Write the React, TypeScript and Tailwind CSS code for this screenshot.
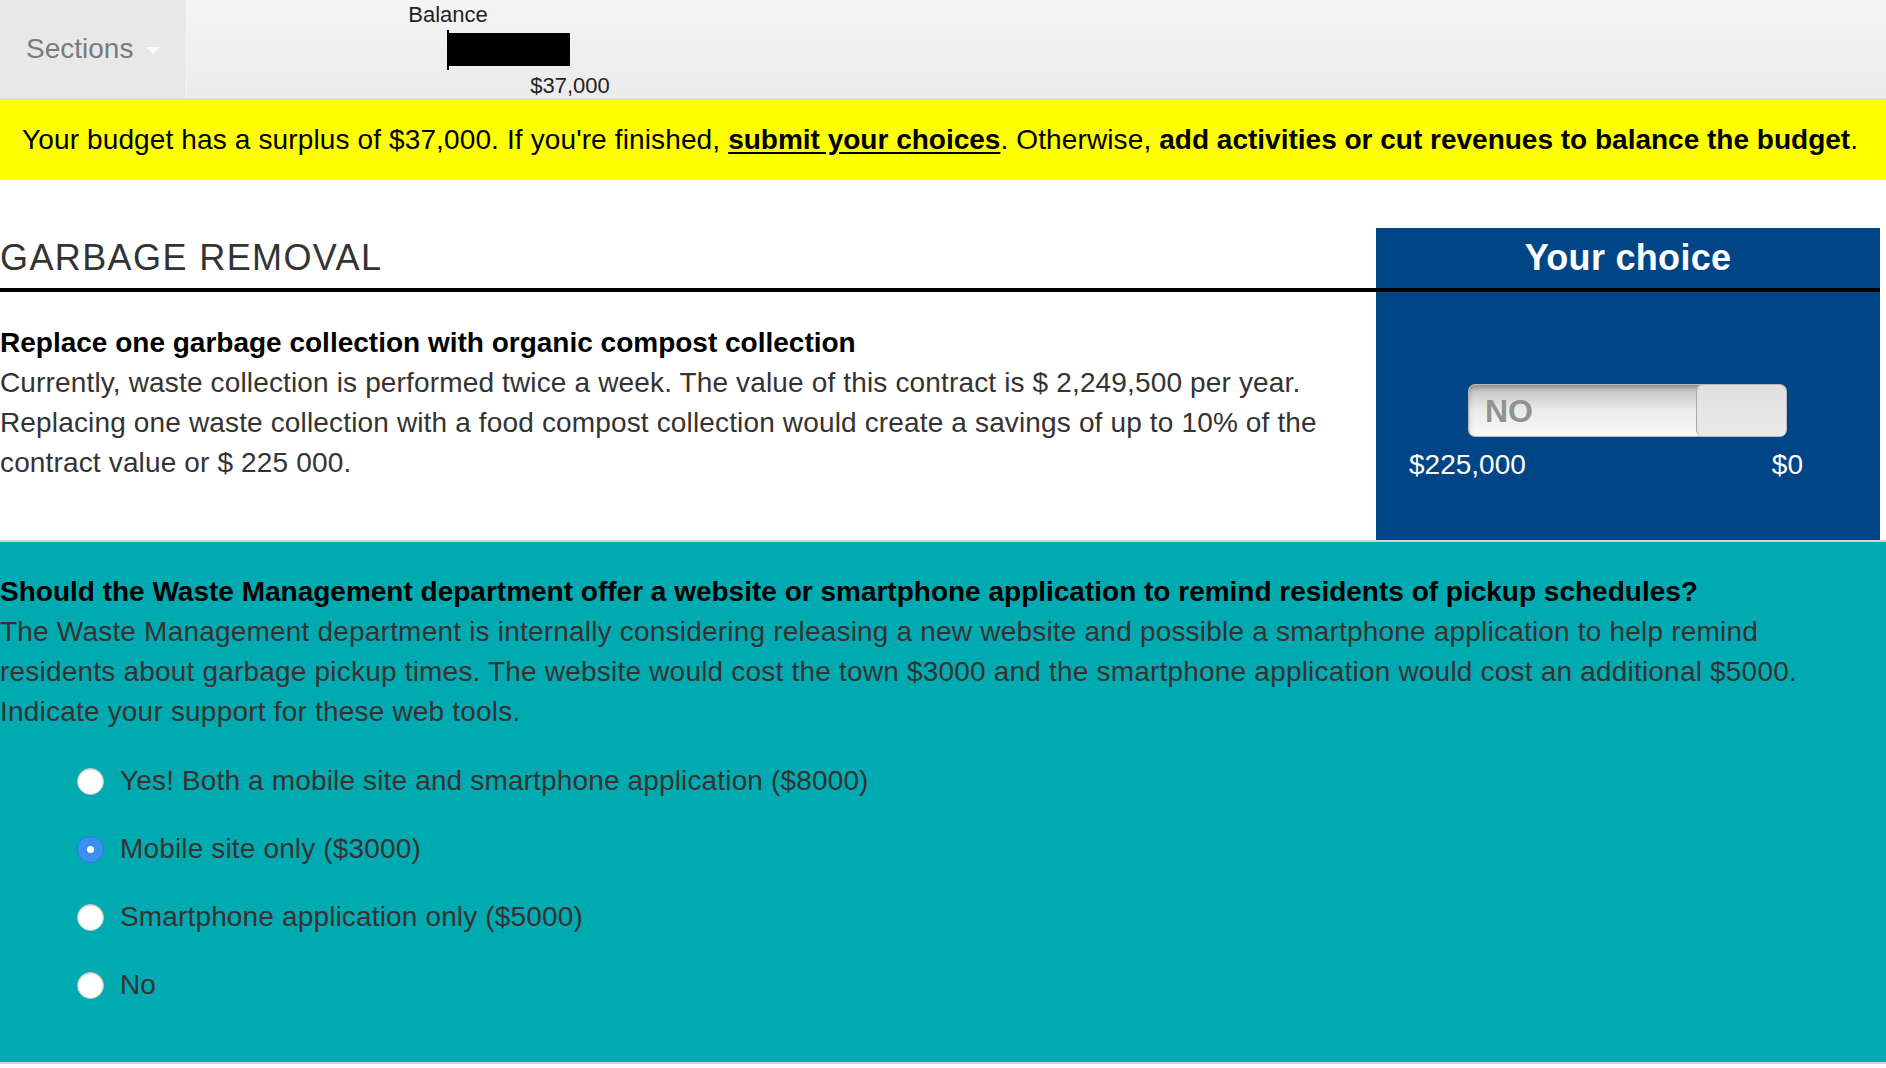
import { useState } from 'react'

const font = { fontFamily: '"Liberation Sans", Arial, Helvetica, sans-serif' }

const options = [
  'Yes! Both a mobile site and smartphone application ($8000)',
  'Mobile site only ($3000)',
  'Smartphone application only ($5000)',
  'No',
]

function TopBar() {
  return (
    <div className="flex h-[100px] border-b-2 border-[#dcdcdc] bg-linear-to-b from-[#f5f5f5] to-[#ebebeb]">
      {/* Sections */}
      <div className="flex w-[187px] items-center border-r border-[#f6f6f6] bg-[#e8e8e8] pl-[26px] text-[28px] text-[#7a7a7a]">
        Sections
        <svg width="14" height="8" viewBox="0 0 14 8" className="ml-[13px] mt-[3px]">
          <path d="M0 0 L14 0 L7 7 Z" fill="#fbfbfb" />
        </svg>
      </div>

      {/* Balance chart */}
      <div className="relative ml-[261px] h-full w-[300px]">
        <div className="absolute left-0 top-[1px] -translate-x-1/2 text-[22px] leading-[28px] text-[#222]">Balance</div>
        <div className="absolute left-[-1px] top-[30px] h-[40px] w-[2px] bg-black" />
        <div className="absolute left-0 top-[33px] h-[33px] w-[122px] bg-black" />
        <div className="absolute left-[122px] top-[72px] -translate-x-1/2 text-[22px] leading-[28px] text-[#222]">$37,000</div>
      </div>
    </div>
  )
}

function Notice() {
  return (
    <div className="flex h-[80px] items-center bg-[#ffff00] pl-[22px] text-[28px] tracking-[0.13px] text-black">
      <p>
        Your budget has a surplus of $37,000. If you're finished,{' '}
        <a className="font-bold tracking-normal underline underline-offset-[3px]">submit your choices</a>. Otherwise,{' '}
        <span className="font-bold tracking-normal">add activities or cut revenues to balance the budget</span>.
      </p>
    </div>
  )
}

function ChoiceSlider() {
  return (
    <div className="ml-[92px] mt-[92px] flex h-[53px] w-[319px] overflow-hidden rounded-[7px] border border-[#b8b8b8] bg-linear-to-b from-[#bdbdbd] via-[#ececec] to-[#f8f8f8] shadow-[inset_0_3px_4px_rgba(0,0,0,0.25)]">
      <div className="flex flex-1 items-center pl-[16px] text-[32px] font-bold text-[#929292]">NO</div>
      <div className="w-[90px] rounded-[6px] border-l border-[#a9a9a9] bg-linear-to-b from-[#e0e0e0] to-[#eaeaea]" />
    </div>
  )
}

function GarbageSection() {
  return (
    <div className="mr-[6px] mt-[48px]">
      <div className="flex h-[64px] border-b-4 border-black">
        <h2 className="flex flex-1 items-center text-[36px] font-light tracking-[1.4px] text-[#333]">GARBAGE REMOVAL</h2>
        <div className="flex w-[504px] items-center justify-center bg-[#004687] text-[36px] font-bold tracking-[0.3px] text-white">
          Your choice
        </div>
      </div>
      <div className="flex h-[248px]">
        <div className="flex-1 pr-[20px] pt-[31px] text-[28px] leading-[40px] tracking-[0.15px] text-[#333]">
          <p className="font-bold tracking-normal text-black">Replace one garbage collection with organic compost collection</p>
          <p>
            Currently, waste collection is performed twice a week. The value of this contract is $ 2,249,500 per year.
            Replacing one waste collection with a food compost collection would create a savings of up to 10% of the
            contract value or $ 225 000.
          </p>
        </div>
        <div className="w-[504px] bg-[#004687]">
          <ChoiceSlider />
          <div className="ml-[33px] mt-[12px] flex w-[394px] justify-between text-[28px] leading-[32px] text-white">
            <span>$225,000</span>
            <span>$0</span>
          </div>
        </div>
      </div>
    </div>
  )
}

function WebToolsSection() {
  const [picked, setPicked] = useState(1)
  return (
    <div className="border-y-2 border-[#d0d0d0] bg-[#00aab1] pb-[43px] pr-[50px] pt-[30px] text-[28px] leading-[40px] tracking-[0.2px]">
      <p className="font-bold tracking-normal text-black">
        Should the Waste Management department offer a website or smartphone application to remind residents of pickup
        schedules?
      </p>
      <p className="text-[#363232]">
        The Waste Management department is internally considering releasing a new website and possible a smartphone
        application to help remind residents about garbage pickup times. The website would cost the town $3000 and the
        smartphone application would cost an additional $5000. Indicate your support for these web tools.
      </p>
      <div className="mt-[15px] tracking-[0.15px]">
        {options.map((opt, i) => (
          <label key={i} className="flex h-[68px] cursor-pointer items-center pl-[77px]" onClick={() => setPicked(i)}>
            {picked === i ? (
              <span className="flex h-[27px] w-[27px] items-center justify-center rounded-full border border-[#2f7ad8] bg-[#3b8ff0]">
                <span className="h-[7px] w-[7px] rounded-full bg-white" />
              </span>
            ) : (
              <span className="h-[27px] w-[27px] rounded-full border border-[#c4c4c4] bg-white shadow-[inset_0_1px_2px_rgba(0,0,0,0.15)]" />
            )}
            <span className="ml-[16px] text-[#363232]">{opt}</span>
          </label>
        ))}
      </div>
    </div>
  )
}

export default function App() {
  return (
    <div className="min-h-screen bg-white" style={font}>
      <TopBar />
      <Notice />
      <GarbageSection />
      <WebToolsSection />
    </div>
  )
}
